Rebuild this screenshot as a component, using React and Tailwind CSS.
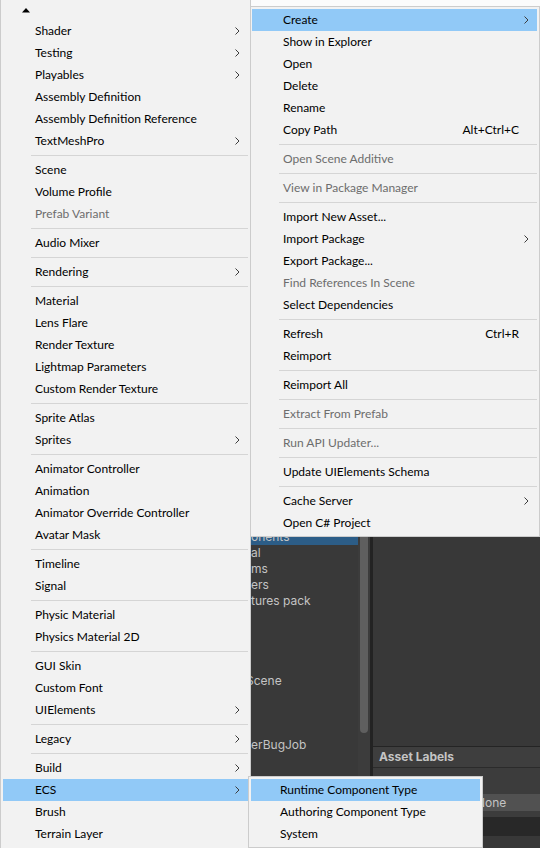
import React from 'react';

const leftItems = [
    { l: 'Shader', a: true },
    { l: 'Testing', a: true },
    { l: 'Playables', a: true },
    { l: 'Assembly Definition' },
    { l: 'Assembly Definition Reference' },
    { l: 'TextMeshPro', a: true },
    'sep',
    { l: 'Scene' },
    { l: 'Volume Profile' },
    { l: 'Prefab Variant', d: true },
    'sep',
    { l: 'Audio Mixer' },
    'sep',
    { l: 'Rendering', a: true },
    'sep',
    { l: 'Material' },
    { l: 'Lens Flare' },
    { l: 'Render Texture' },
    { l: 'Lightmap Parameters' },
    { l: 'Custom Render Texture' },
    'sep',
    { l: 'Sprite Atlas' },
    { l: 'Sprites', a: true },
    'sep',
    { l: 'Animator Controller' },
    { l: 'Animation' },
    { l: 'Animator Override Controller' },
    { l: 'Avatar Mask' },
    'sep',
    { l: 'Timeline' },
    { l: 'Signal' },
    'sep',
    { l: 'Physic Material' },
    { l: 'Physics Material 2D' },
    'sep',
    { l: 'GUI Skin' },
    { l: 'Custom Font' },
    { l: 'UIElements', a: true },
    'sep',
    { l: 'Legacy', a: true },
    'sep',
    { l: 'Build', a: true },
    { l: 'ECS', a: true, hl: true },
    { l: 'Brush' },
    { l: 'Terrain Layer' },
];

const rightItems = [
    { l: 'Create', a: true, hl: true },
    { l: 'Show in Explorer' },
    { l: 'Open' },
    { l: 'Delete' },
    { l: 'Rename' },
    { l: 'Copy Path', s: 'Alt+Ctrl+C' },
    'sep',
    { l: 'Open Scene Additive', d: true },
    'sep',
    { l: 'View in Package Manager', d: true },
    'sep',
    { l: 'Import New Asset...' },
    { l: 'Import Package', a: true },
    { l: 'Export Package...' },
    { l: 'Find References In Scene', d: true },
    { l: 'Select Dependencies' },
    'sep',
    { l: 'Refresh', s: 'Ctrl+R' },
    { l: 'Reimport' },
    'sep',
    { l: 'Reimport All' },
    'sep',
    { l: 'Extract From Prefab', d: true },
    'sep',
    { l: 'Run API Updater...', d: true },
    'sep',
    { l: 'Update UIElements Schema' },
    'sep',
    { l: 'Cache Server', a: true },
    { l: 'Open C# Project' },
];

const ecsItems = [
    { l: 'Runtime Component Type', hl: true },
    { l: 'Authoring Component Type' },
    { l: 'System' },
];

const Chevron = () => (
    <svg width="5" height="8" viewBox="0 0 5 8">
        <polyline points="0.5,0.5 4,4 0.5,7.5" fill="none" stroke="#3c3c3c" strokeWidth="1" />
    </svg>
);

const MenuRows = ({ items, padClass, sepClass }) => (
    <>
        {items.map((it, i) =>
            it === 'sep' ? (
                <div key={i} className="h-[7px] flex items-center">
                    <div className={`h-px flex-1 bg-[#d5d5d5] ${sepClass}`}></div>
                </div>
            ) : (
                <div
                    key={i}
                    className={`h-[22px] flex items-center ${padClass} ${it.hl ? 'bg-[#91c9f7]' : ''} ${
                        it.d ? 'text-[#6d6d6d]' : 'text-black'
                    }`}
                >
                    <span className="flex-1 whitespace-nowrap">{it.l}</span>
                    {it.s && <span className="whitespace-nowrap -mr-[4px]">{it.s}</span>}
                    <span className="w-[22px] flex items-center justify-center">{it.a && <Chevron />}</span>
                </div>
            )
        )}
    </>
);

const treeRows = [
    { t: 'onents', sel: true },
    { t: 'al' },
    { t: 'ms' },
    { t: 'ers' },
    { t: 'tures pack' },
    { t: '' },
    { t: '' },
    { t: '' },
    { t: '' },
    { t: 'Scene', shift: true },
    { t: '' },
    { t: '' },
    { t: '' },
    { t: 'erBugJob' },
];

export default function App() {
    return (
        <div
            className="relative w-[540px] h-[848px] overflow-hidden bg-[#383838] text-[12px]"
            style={{ fontFamily: 'Lato, "Noto Sans", sans-serif' }}
        >
            {/* unity editor behind the menus */}
            <div className="flex flex-col h-full" style={{ fontFamily: 'Inter, Roboto, sans-serif' }}>
                <div className="h-[6px] bg-[#fbfbfb]"></div>
                <div className="flex flex-1">
                    <div className="w-[250px] bg-[#383838]"></div>
                    <div className="w-[108px] bg-[#393939] pt-[523px] text-[#c4c4c4]">
                        {treeRows.map((r, i) => (
                            <div
                                key={i}
                                className={`h-[16px] flex items-center pl-px whitespace-nowrap ${
                                    r.sel ? 'bg-[#2c5d87]' : ''
                                }`}
                            >
                                <span className={r.shift ? '-ml-[5px]' : ''}>{r.t}</span>
                            </div>
                        ))}
                    </div>
                    <div className="w-[12px] bg-[#3c3c3c] flex flex-col">
                        <div className="h-[727px] mx-[2px] bg-[#5f5f5f] rounded-b-[5px]"></div>
                    </div>
                    <div className="w-[3px] bg-[#232323]"></div>
                    <div className="flex-1 flex flex-col">
                        <div className="h-[740px] bg-[#383838]"></div>
                        <div className="h-px bg-[#242424]"></div>
                        <div className="h-[20px] bg-[#3e3e3e] flex items-center pl-[6px] font-bold text-[#c4c4c4]">
                            Asset Labels
                        </div>
                        <div className="h-px bg-[#2b2b2b]"></div>
                        <div className="h-[26px] bg-[#3c3c3c]"></div>
                        <div className="h-[17px] bg-[#3c3c3c] flex">
                            <div className="ml-[99px] flex-1 bg-[#515151] rounded-l-[3px] flex items-center pl-[4px] text-[#c4c4c4]">
                                None
                            </div>
                        </div>
                        <div className="h-[6px] bg-[#3c3c3c]"></div>
                        <div className="h-[19px] bg-[#282828]"></div>
                        <div className="flex-1 bg-[#383838]"></div>
                    </div>
                </div>
            </div>

            {/* context menu */}
            <div className="absolute left-[249px] top-[6px] w-[291px] h-[531px] bg-[#f2f2f2] border border-[#cccccc] p-[2px]">
                <MenuRows items={rightItems} padClass="pl-[31px]" sepClass="ml-[27px]" />
            </div>

            {/* create submenu */}
            <div className="absolute left-0 top-0 w-[251px] h-[848px] bg-[#f2f2f2] border-x border-[#cccccc] px-[2px] pt-[20px]">
                <div className="absolute left-[20px] top-[7px]">
                    <svg width="10" height="6" viewBox="0 0 10 6">
                        <polygon points="1,5.5 5,1 9,5.5" fill="#000" />
                    </svg>
                </div>
                <MenuRows items={leftItems} padClass="pl-[32px]" sepClass="ml-[28px]" />
            </div>

            {/* ecs submenu */}
            <div className="absolute left-[248px] top-[776px] w-[235px] h-[72px] bg-[#f2f2f2] border border-[#cccccc] p-[2px]">
                <MenuRows items={ecsItems} padClass="pl-[29px]" sepClass="" />
            </div>
        </div>
    );
}
